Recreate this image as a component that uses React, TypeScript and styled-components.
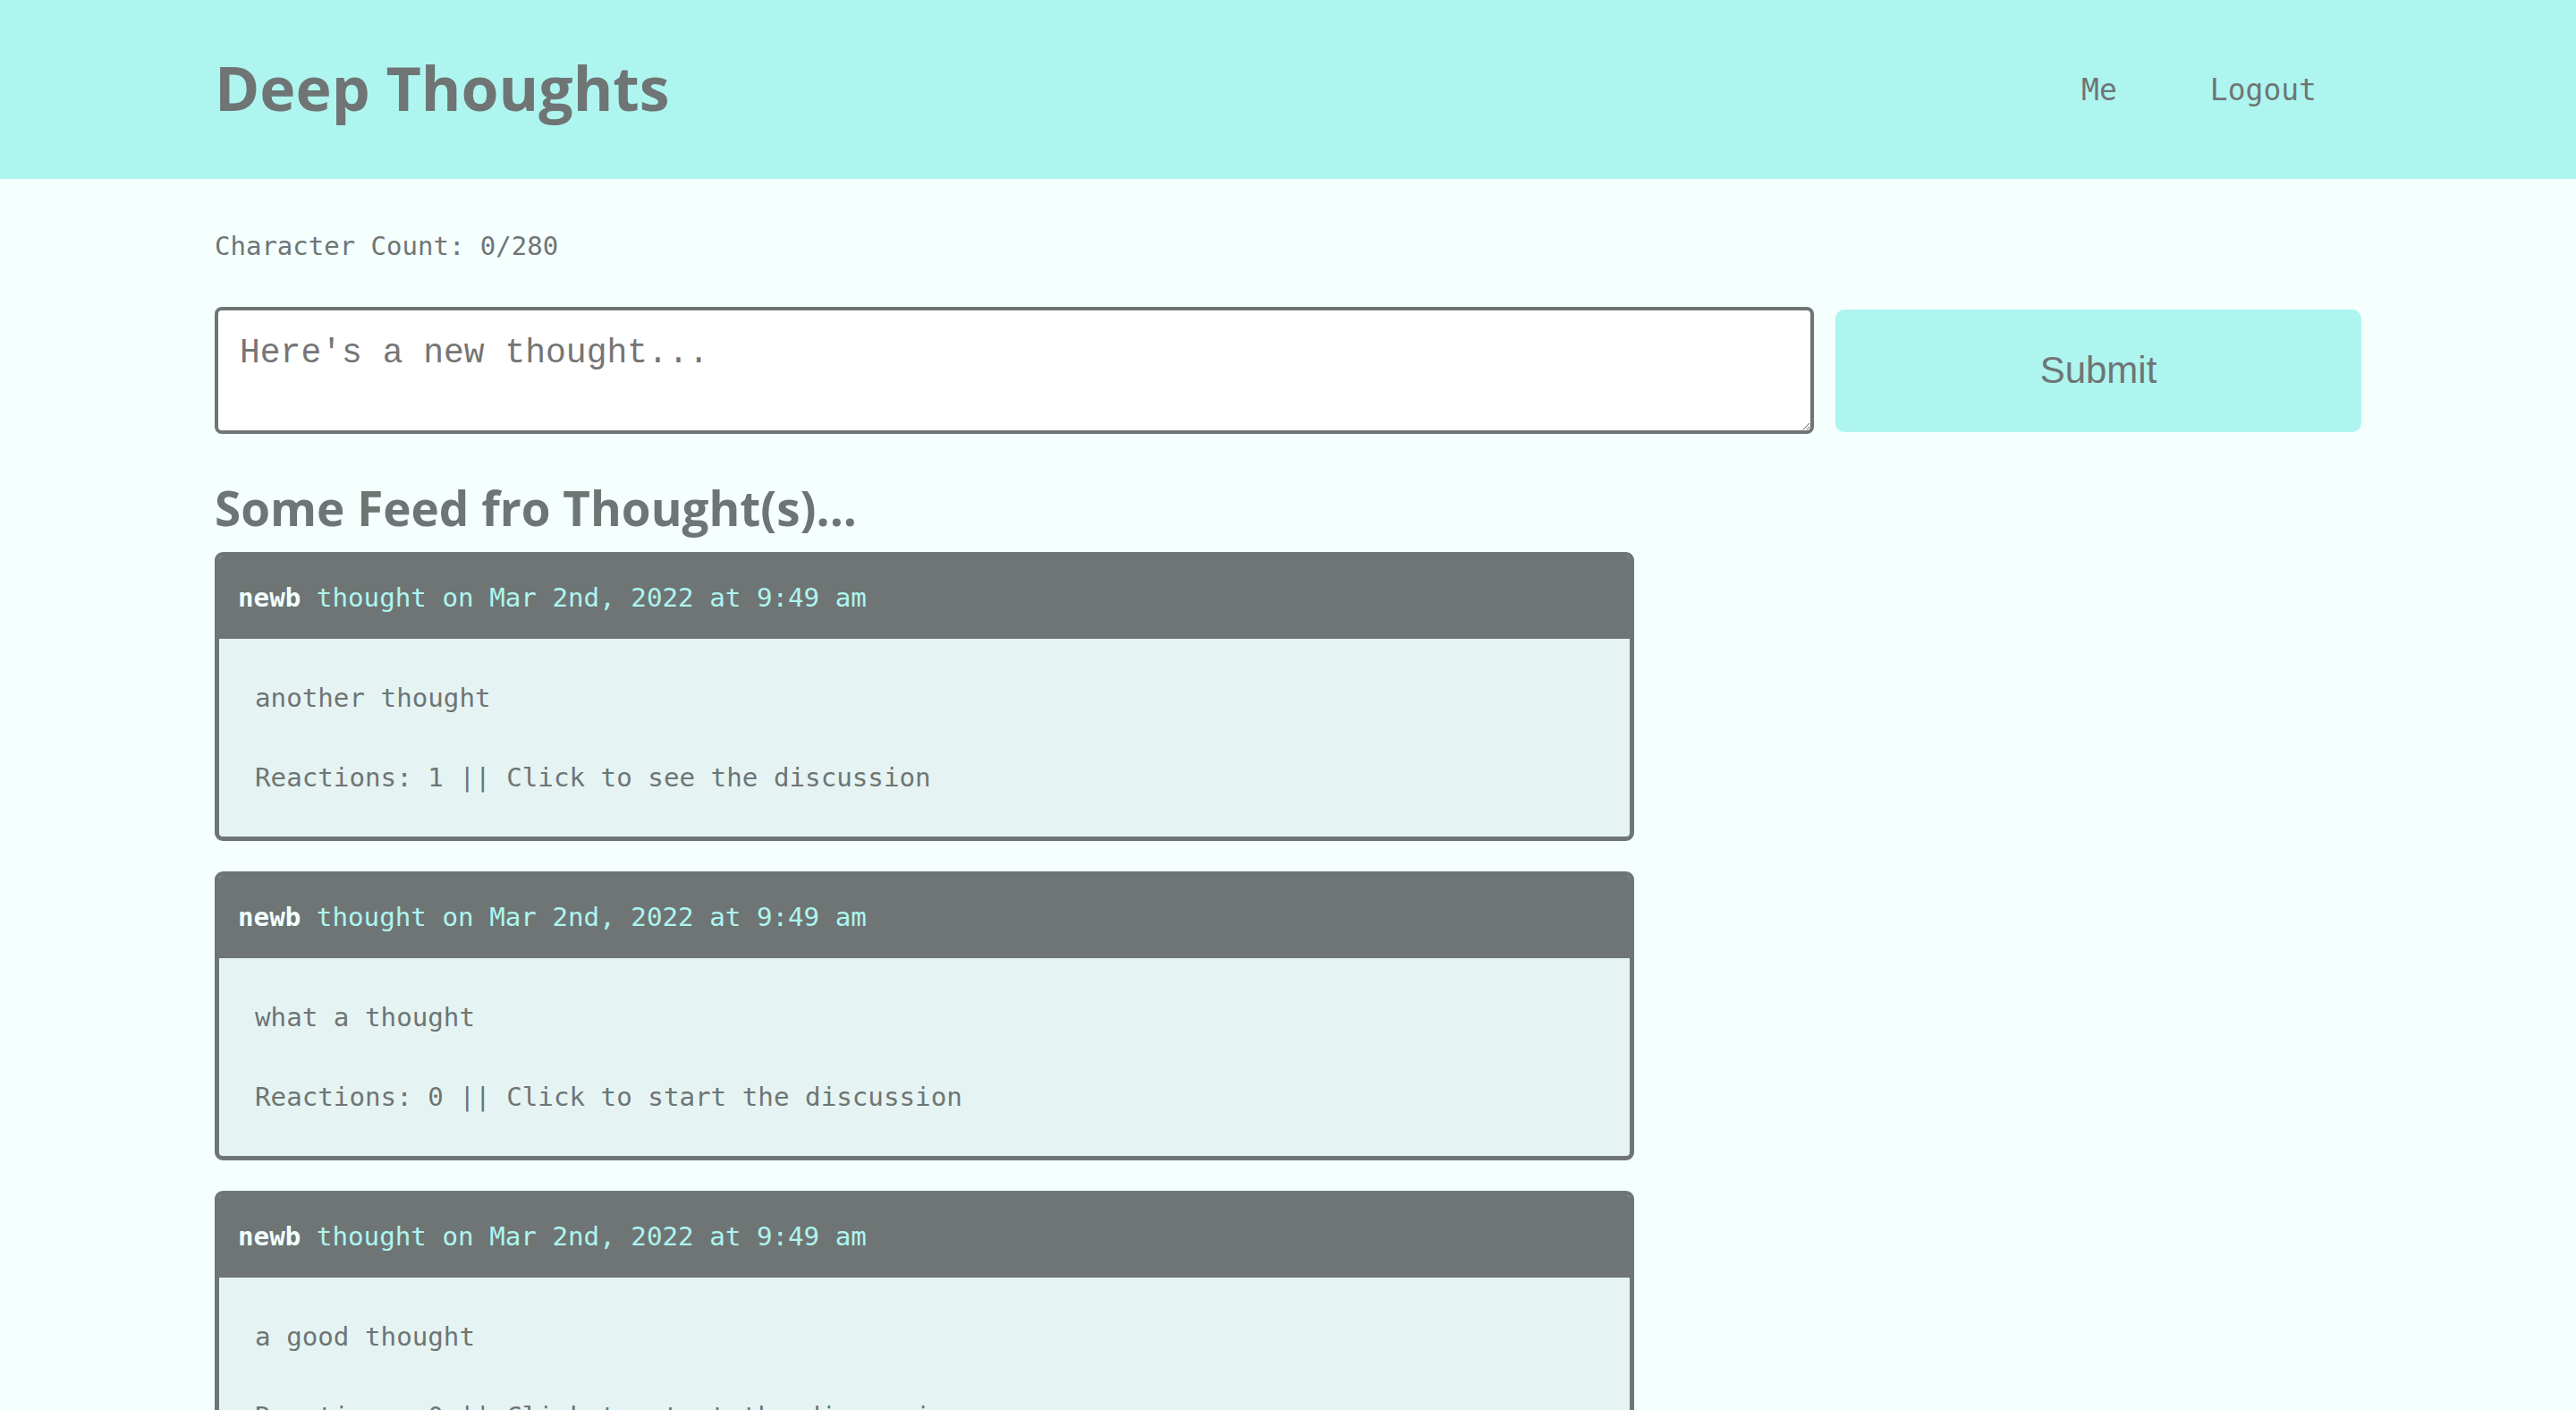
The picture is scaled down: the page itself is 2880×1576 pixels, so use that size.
import React from "react";
import styled, { createGlobalStyle } from "styled-components";

const GlobalStyle = createGlobalStyle`
  html, body {
    margin: 0;
    padding: 0;
    background: #f4fffe;
  }
  * { box-sizing: border-box; }
`;

const gray = "#6f7574";
const cyan = "#aef5f0";
const mono = `"DejaVu Sans Mono", "Liberation Mono", monospace`;
const display = `"Open Sans", "Noto Sans", sans-serif`;

const Page = styled.div`
  min-height: 100vh;
  background: #f4fffe;
  color: ${gray};
  font-family: ${mono};
`;

const Header = styled.header`
  background: ${cyan};
  height: 200px;
`;

const Container = styled.div`
  max-width: 2400px;
  margin: 0 auto;
`;

const HeaderInner = styled(Container)`
  height: 100%;
  display: flex;
  align-items: center;
  justify-content: space-between;
`;

const Title = styled.h1`
  margin: -4px 0 0 0;
  font-family: ${display};
  font-weight: 700;
  font-size: 68px;
  line-height: 1;
  color: ${gray};
`;

const Nav = styled.nav`
  display: flex;
  align-items: center;
`;

const NavLink = styled.a`
  padding: 0 52px;
  font-family: ${mono};
  font-size: 33px;
  line-height: 1;
  color: ${gray};
  text-decoration: none;
  cursor: pointer;
  &:last-child { padding-right: 50px; }
`;

const Main = styled(Container)`
  padding-top: 58px;
  padding-bottom: 80px;
`;

const CharCount = styled.p`
  margin: 0;
  font-family: ${mono};
  font-size: 29px;
  color: ${gray};
`;

const Form = styled.form`
  margin-top: 51px;
  display: grid;
  grid-template-columns: 1fr 588px;
  column-gap: 24px;
  align-items: center;
`;

const TextArea = styled.textarea`
  height: 142px;
  width: 100%;
  padding: 26px 24px;
  border: 4px solid ${gray};
  border-radius: 8px;
  background: #ffffff;
  font-family: "Liberation Mono", "Courier New", monospace;
  font-size: 38px;
  color: ${gray};
  outline: none;
  &::placeholder { color: #757575; }
`;

const SubmitButton = styled.button`
  height: 137px;
  border: none;
  border-radius: 10px;
  background: ${cyan};
  font-family: "Liberation Sans", Arial, sans-serif;
  font-size: 42px;
  color: ${gray};
  cursor: pointer;
`;

const FeedTitle = styled.h2`
  margin: 46px 0 13px;
  font-family: ${display};
  font-weight: 700;
  font-size: 53px;
  color: ${gray};
`;

const Feed = styled.div`
  width: 1587px;
  display: flex;
  flex-direction: column;
  gap: 34px;
`;

const Card = styled.article`
  border: 5px solid ${gray};
  border-radius: 9px;
  overflow: hidden;
  background: #e5f4f3;
`;

const CardHeader = styled.div`
  background: ${gray};
  padding: 29px 21px 29px;
  font-family: ${mono};
  font-size: 29.2px;
  color: ${cyan};
`;

const Author = styled.span`
  font-weight: 700;
  color: #f2fffe;
`;

const CardBody = styled.div`
  padding: 49px 40px 49px;
  display: flex;
  flex-direction: column;
  gap: 55px;
`;

const CardText = styled.p`
  margin: 0;
  font-family: ${mono};
  font-size: 29.2px;
  color: ${gray};
`;

type Thought = { text: string; reactions: number };

const thoughts: Thought[] = [
  { text: "another thought", reactions: 1 },
  { text: "what a thought", reactions: 0 },
  { text: "a good thought", reactions: 0 },
];

export default function App() {
  return (
    <>
      <GlobalStyle />
      <Page>
        <Header>
          <HeaderInner>
            <Title>Deep Thoughts</Title>
            <Nav>
              <NavLink>Me</NavLink>
              <NavLink>Logout</NavLink>
            </Nav>
          </HeaderInner>
        </Header>
        <Main>
          <CharCount>Character Count: 0/280</CharCount>
          <Form onSubmit={(e) => e.preventDefault()}>
            <TextArea placeholder="Here's a new thought..." />
            <SubmitButton type="submit">Submit</SubmitButton>
          </Form>
          <FeedTitle>Some Feed fro Thought(s)...</FeedTitle>
          <Feed>
            {thoughts.map((t, i) => (
              <Card key={i}>
                <CardHeader>
                  <Author>newb</Author> thought on Mar 2nd, 2022 at 9:49 am
                </CardHeader>
                <CardBody>
                  <CardText>{t.text}</CardText>
                  <CardText>
                    Reactions: {t.reactions} || Click to{" "}
                    {t.reactions ? "see" : "start"} the discussion
                  </CardText>
                </CardBody>
              </Card>
            ))}
          </Feed>
        </Main>
      </Page>
    </>
  );
}
